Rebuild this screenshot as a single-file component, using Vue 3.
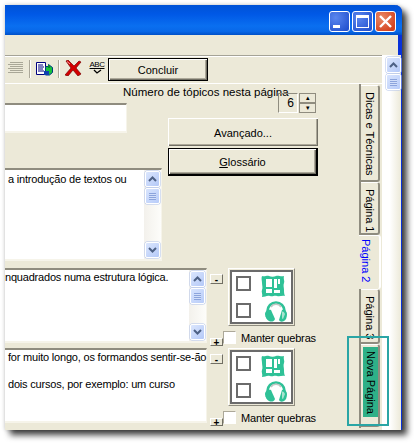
<script setup>
const tabs = [
  { label: 'Dicas e Técnicas', h: 97 },
  { label: 'Página 1', h: 53 },
  { label: 'Página 2', h: 54, active: true },
  { label: 'Página 3', h: 55 },
  { label: 'Nova Página', h: 83, fresh: true }
]

const rows = [
  { text: ['nquadrados numa estrutura lógica.'], scroll: true },
  { text: ['for muito longo, os formandos sentir-se-ão', 'dois cursos, por exemplo: um curso'], scroll: false }
]
</script>

<template>
  <div class="shot">
    <div class="window">
      <header class="titlebar">
        <button class="cap min"><span class="min-glyph"></span></button>
        <button class="cap max"><span class="max-glyph"></span></button>
        <button class="cap close">
          <svg width="15" height="15" viewBox="0 0 15 15"><path d="M2 2 13 13M13 2 2 13" stroke="#fff" stroke-width="2.4" fill="none" /></svg>
        </button>
      </header>
      <div class="menubar"></div>

      <div class="frame">
        <div class="workspace">
          <div class="toolbar">
            <svg class="tool lines" width="15" height="12" viewBox="0 0 15 12">
              <path d="M2 .5h13M0 2.5h15M2 4.5h13M0 6.5h15M2 8.5h13M0 10.5h15" stroke="#a9a797" fill="none" />
            </svg>
            <i class="sep"></i>
            <svg class="tool" width="17" height="14" viewBox="0 0 17 14">
              <path d="M.5 .5h9v12h-9z" fill="#fff" stroke="#000080" />
              <path d="M2 3h5M2 5h6M2 7h5M2 9h6" stroke="#000080" />
              <path d="M9.5 4.5h3v-2l4 3v5l-3 2.5h-4z" fill="#16c23c" stroke="#003a80" />
              <path d="M8 9h5v4H8z" fill="#1040b0" />
              <path d="M12 3h2v3h-2z" fill="#0a8a2c" />
            </svg>
            <i class="sep second"></i>
            <svg class="tool cross" width="17" height="16" viewBox="0 0 17 16">
              <path d="M1 1 3 0l6 6 5-5 2 1-5 6 5 6-3 2-5-6-5 6-3-1 6-7z" fill="#d40000" stroke="#7a0000" stroke-width=".7" />
              <path d="M2 1.5 5 4" stroke="#f4a0a0" fill="none" />
            </svg>
            <span class="abc">
              <span class="abc-text">ABC</span>
              <svg width="11" height="5" viewBox="0 0 11 5"><path d="M2 1 5 4 9 1" stroke="#000" stroke-width="1.3" fill="none" /></svg>
            </span>
            <button class="btn conclude">Concluir</button>
          </div>

          <div class="body">
            <div class="main">
              <section class="upper">
                <div class="upper-left">
                  <div class="sunken name-box"></div>
                  <div class="sunken intro">
                    <p class="copy">a introdução de textos ou</p>
                    <div class="scrollbar">
                      <span class="sb-btn"><svg width="9" height="6" viewBox="0 0 9 6"><path d="M1 5 4.5 1.5 8 5" stroke="#4d6185" stroke-width="2" fill="none" /></svg></span>
                      <span class="sb-thumb"></span>
                      <span class="sb-fill"></span>
                      <span class="sb-btn"><svg width="9" height="6" viewBox="0 0 9 6"><path d="M1 1 4.5 4.5 8 1" stroke="#4d6185" stroke-width="2" fill="none" /></svg></span>
                    </div>
                  </div>
                </div>
                <div class="upper-right">
                  <div class="caption-row">
                    <span class="caption">Número de tópicos nesta página</span>
                    <div class="spin">
                      <span class="spin-value">6</span>
                      <span class="spin-arrows">
                        <span class="spin-btn">▴</span>
                        <span class="spin-btn">▾</span>
                      </span>
                    </div>
                  </div>
                  <button class="btn wide advanced">Avançado...</button>
                  <button class="btn wide default"><span><u>G</u>lossário</span></button>
                </div>
              </section>

              <section v-for="(row, i) in rows" :key="i" class="row">
                <div class="sunken row-text">
                  <div class="row-copy">
                    <p v-for="line in row.text" :key="line" class="copy">{{ line }}</p>
                  </div>
                  <div v-if="row.scroll" class="scrollbar narrow">
                    <span class="sb-btn"><svg width="9" height="6" viewBox="0 0 9 6"><path d="M1 5 4.5 1.5 8 5" stroke="#4d6185" stroke-width="2" fill="none" /></svg></span>
                    <span class="sb-thumb"></span>
                    <span class="sb-fill"></span>
                    <span class="sb-btn"><svg width="9" height="6" viewBox="0 0 9 6"><path d="M1 1 4.5 4.5 8 1" stroke="#4d6185" stroke-width="2" fill="none" /></svg></span>
                  </div>
                </div>
                <div class="stepper">
                  <button class="mini">-</button>
                  <button class="mini plus">+</button>
                </div>
                <div class="layout-col">
                  <div class="layout-box">
                    <div class="layout-inner">
                      <div class="layout-line">
                        <span class="square"></span>
                        <svg class="pic" width="24" height="24" viewBox="0 0 24 24">
                          <path d="M1 2c3 1 5-1 7 0s5 1 7 0 5 1 8 0c-1 3 1 5 0 7s0 5 0 7 0 4 1 6c-3-1-5 1-8 0s-4 1-7 0-5 1-8 1c1-3-1-5 0-7s0-5 0-7-1-5 0-7z" fill="#2fc197" />
                          <path d="M5 5h6v8H5zM5 15h6v4H5zM13 5h3v9h-3zM17 5h2v5h-2zM13 16h6v3h-6z" fill="#fff" />
                        </svg>
                      </div>
                      <div class="layout-line">
                        <span class="square"></span>
                        <svg class="pic phones" width="22" height="21" viewBox="0 0 22 21">
                          <path d="M2.5 14V10a8.5 8.5 0 0 1 17 0v4" fill="none" stroke="#2fc197" stroke-width="2.6" />
                          <path d="M6 6a6 6 0 0 1 10 0" fill="none" stroke="#c4c4c4" stroke-width="1.5" />
                          <path d="M0 13c0-3 4-5 6-4l4 9c-1 3-4 3-6 2s-4-4-4-7z" fill="#2fc197" />
                          <path d="M22 13c0-3-3-5-5-4l-3 10c1 2 3 2 5 1s3-4 3-7z" fill="#2fc197" />
                          <path d="M17 11c1-1 2 0 3 2l-2 5c-1 0-1-1-1-2z" fill="#a8e3d0" />
                        </svg>
                      </div>
                    </div>
                  </div>
                  <label class="keep">
                    <span class="check"></span>
                    <span>Manter quebras</span>
                  </label>
                </div>
              </section>
            </div>

            <nav class="tabs">
              <div
                v-for="tab in tabs"
                :key="tab.label"
                :class="['tab', { active: tab.active, fresh: tab.fresh }]"
                :style="{ height: tab.h + 'px' }"
              >
                <span class="tab-label">{{ tab.label }}</span>
              </div>
              <div class="highlight"></div>
            </nav>
          </div>
        </div>

        <aside class="outer-scroll">
          <span class="sb-btn"><svg width="9" height="6" viewBox="0 0 9 6"><path d="M1 5 4.5 1.5 8 5" stroke="#4d6185" stroke-width="2" fill="none" /></svg></span>
          <span class="sb-thumb"></span>
        </aside>
      </div>
    </div>
  </div>
</template>

<style>
html,
body {
  margin: 0;
  background: #fff;
}
</style>

<style scoped>
.shot {
  width: 414px;
  height: 446px;
  padding: 5px 0 0 5px;
  box-sizing: border-box;
  overflow: hidden;
  background: #fff;
  font-family: "Liberation Sans", Arial, sans-serif;
  font-size: 11px;
  color: #000;
}

.window {
  width: 397px;
  height: 425px;
  box-sizing: border-box;
  border-right: 4px solid #0831d9;
  border-top-right-radius: 7px;
  background: #ece9d8;
  box-shadow: 5px 5px 6px rgba(0, 0, 0, 0.75), 0 0 4px rgba(0, 0, 0, 0.2);
}

.titlebar {
  height: 30px;
  margin-right: -4px;
  box-sizing: border-box;
  padding: 6px 6px 0 0;
  display: flex;
  justify-content: flex-end;
  gap: 2px;
  border-top-right-radius: 7px;
  background: linear-gradient(#0053d6 0%, #0058e6 30%, #0a6ff0 70%, #0868e8 88%, #0050c8 100%);
}

.cap {
  width: 21px;
  height: 21px;
  padding: 0;
  border: 1px solid #fff;
  border-radius: 3px;
  display: flex;
  align-items: center;
  justify-content: center;
  background: radial-gradient(circle at 30% 30%, #5a86ee, #2553d0 85%);
}

.cap.close {
  background: radial-gradient(circle at 30% 30%, #e98a66, #d4421f 80%);
}

.min-glyph {
  width: 7px;
  height: 3px;
  margin: 9px 6px 0 0;
  background: #fff;
}

.max-glyph {
  width: 11px;
  height: 9px;
  border: 1px solid #fff;
  border-top-width: 3px;
}

.menubar {
  height: 20px;
}

.frame {
  display: flex;
  height: 375px;
}

.workspace {
  width: 377px;
  flex: none;
}

.toolbar {
  height: 28px;
  box-sizing: border-box;
  border-top: 1px solid #a5a397;
  box-shadow: inset 0 1px 0 #fff;
  padding: 2px 0 0 3px;
  display: flex;
  align-items: flex-start;
}

.tool {
  flex: none;
  margin-top: 4px;
}

.sep {
  width: 1px;
  height: 18px;
  margin: 2px 6px 0 6px;
  background: #aca899;
  box-shadow: 1px 0 0 #fff;
}

.sep.second {
  margin-left: 5px;
}

.cross {
  margin-top: 2px;
}

.abc {
  width: 14px;
  margin: 3px 4px 0 8px;
  display: flex;
  flex-direction: column;
  align-items: center;
  line-height: 8px;
}

.abc-text {
  font-size: 8px;
  letter-spacing: -0.5px;
  text-decoration: underline;
}

.btn {
  padding: 0;
  border: 1px solid #000;
  background: #ece9d8;
  font: inherit;
  color: #000;
  box-shadow: inset 1px 1px 0 #fff, inset -1px -1px 0 #716f64, inset -2px -2px 0 #aca899;
}

.conclude {
  width: 100px;
  height: 23px;
}

.body {
  height: 345px;
  display: flex;
  border-top: 1px solid #fff;
  box-sizing: border-box;
}

.main {
  width: 354px;
  flex: none;
}

.upper {
  display: flex;
  height: 184px;
}

.upper-left {
  width: 157px;
  flex: none;
  padding-top: 19px;
  box-sizing: border-box;
  margin-right: 6px;
}

.sunken {
  box-sizing: border-box;
  background: #fff;
  border-top: 2px solid #8f8c7f;
  border-right: 1px solid #f6f4ea;
  border-bottom: 2px solid #f6f4ea;
}

.name-box {
  width: 122px;
  height: 30px;
}

.intro {
  height: 93px;
  margin-top: 35px;
  display: flex;
  justify-content: space-between;
}

.copy {
  margin: 0;
  padding: 3px 0 0 3px;
  white-space: nowrap;
  line-height: 13px;
  letter-spacing: -0.2px;
}

.scrollbar {
  width: 17px;
  flex: none;
  box-sizing: border-box;
  padding: 1px;
  display: flex;
  flex-direction: column;
  gap: 1px;
  background: linear-gradient(90deg, #f3f1ec, #fdfdfa);
}

.sb-btn,
.sb-thumb {
  width: 15px;
  height: 16px;
  box-sizing: border-box;
  flex: none;
  display: flex;
  align-items: center;
  justify-content: center;
  border: 1px solid #fff;
  border-radius: 2px;
  background: linear-gradient(135deg, #dbe6fd, #b4c9f8);
  box-shadow: 0 0 0 0.5px #b0c2ea;
}

.sb-thumb {
  background: repeating-linear-gradient(#8ca4dc 0 1px, #d2dffa 1px 2px) center / 7px 7px no-repeat,
    linear-gradient(135deg, #d8e4fd, #b8ccf9);
}

.sb-fill {
  flex: 1;
}

.upper-right {
  width: 150px;
  flex: none;
}

.caption-row {
  height: 34px;
  margin-left: -45px;
  display: flex;
  align-items: flex-start;
}

.caption {
  width: 155px;
  flex: none;
  padding-top: 2px;
  white-space: nowrap;
  font-size: 11.5px;
}

.spin {
  margin-top: 9px;
  height: 20px;
  display: flex;
  gap: 1px;
}

.spin-value {
  width: 20px;
  box-sizing: border-box;
  padding: 2px 3px 0 0;
  text-align: right;
  font-size: 12px;
  border: 1px solid #8f8c7f;
  border-right-color: #fff;
  border-bottom-color: #fff;
}

.spin-arrows {
  width: 17px;
  display: flex;
  flex-direction: column;
}

.spin-btn {
  height: 10px;
  font-size: 7px;
  line-height: 8px;
  text-align: center;
  box-sizing: border-box;
  background: #ece9d8;
  border: 1px solid #8f8c7f;
}

.wide {
  display: block;
  width: 150px;
  height: 28px;
  padding-top: 1px;
}

.advanced {
  border: none;
  box-shadow: inset 1px 1px 0 #fff, inset -1px -1px 0 #716f64, inset -2px -2px 0 #aca899;
  margin-bottom: 2px;
}

.default {
  height: 28px;
  border-width: 1px 2px 2px 1px;
}

.row {
  height: 80px;
  box-sizing: border-box;
  display: flex;
}

.row-text {
  width: 202px;
  height: 75px;
  flex: none;
  display: flex;
  justify-content: space-between;
}

.row-copy {
  min-width: 0;
}

.row-copy .copy {
  padding: 1px 0 0 0;
  margin-bottom: 13px;
}

.row:last-child .copy {
  padding-left: 3px;
}

.stepper {
  width: 13px;
  flex: none;
  margin-left: 3px;
  display: flex;
  flex-direction: column;
  justify-content: space-between;
  padding-top: 6px;
  box-sizing: border-box;
  height: 78px;
}

.mini {
  width: 13px;
  height: 10px;
  padding: 0;
  border: 1px solid #fff;
  border-right-color: #716f64;
  border-bottom-color: #716f64;
  background: #ece9d8;
  font: 700 10px/7px "Liberation Sans", sans-serif;
}

.plus {
  height: 8px;
}

.layout-col {
  width: 100px;
  flex: none;
}

.layout-box {
  width: 67px;
  height: 58px;
  margin-left: 5px;
  box-sizing: border-box;
  border: 1px solid;
  border-color: #fff #8f8c7f #8f8c7f #fff;
  padding: 1px;
}

.layout-inner {
  height: 100%;
  box-sizing: border-box;
  background: #fff;
  border: 2px solid #6b6b6b;
  padding: 0 6px 0 4px;
  display: flex;
  flex-direction: column;
}

.layout-line {
  height: 27px;
  flex: none;
  display: flex;
  justify-content: space-between;
  align-items: flex-start;
}

.square {
  width: 15px;
  height: 15px;
  margin-top: 4px;
  box-sizing: border-box;
  border: 2px solid #6b6b6b;
}

.pic {
  margin-top: 2px;
}

.phones {
  margin-right: -2px;
}

.keep {
  margin-top: 5px;
  display: flex;
  align-items: center;
  gap: 5px;
  height: 13px;
  letter-spacing: -0.15px;
  white-space: nowrap;
}

.check {
  width: 13px;
  height: 13px;
  box-sizing: border-box;
  background: #fff;
  border: 1px solid;
  border-color: #aca899 #fff #fff #aca899;
}

.tabs {
  position: relative;
  width: 23px;
  flex: none;
  box-sizing: border-box;
  padding-top: 1px;
  border-left: 2px solid #8f8c7f;
}

.tab {
  width: 19px;
  box-sizing: border-box;
  border-top: 1px solid #fff;
  border-right: 2px solid #8f8c7f;
  border-bottom: 2px solid #8f8c7f;
  border-radius: 0 3px 3px 0;
  padding: 6px 0 0 1px;
  overflow: hidden;
}

.tab-label {
  display: block;
  writing-mode: vertical-rl;
  white-space: nowrap;
  line-height: 15px;
}

.tab.active {
  width: 22px;
  margin-left: -2px;
  padding: 3px 0 0 0;
  color: #0000ff;
  background: #ece9d8;
  border-right-color: #fff;
  border-top-color: #fff;
  border-bottom: none;
}

.tab.active .tab-label {
  line-height: 13px;
}

.tab.fresh {
  padding: 2px 2px 0 2px;
}

.tab.fresh .tab-label {
  background: #2fb088;
  height: 70px;
  padding-top: 4px;
  box-sizing: border-box;
}

.highlight {
  position: absolute;
  left: -14px;
  top: 252px;
  width: 42px;
  height: 90px;
  box-sizing: border-box;
  border: 2px solid #2aa5a5;
}

.outer-scroll {
  flex: 1;
  padding: 2px 0 0 4px;
  display: flex;
  flex-direction: column;
  gap: 1px;
  background: linear-gradient(90deg, #fff 40%, #ece9d8);
}
</style>
